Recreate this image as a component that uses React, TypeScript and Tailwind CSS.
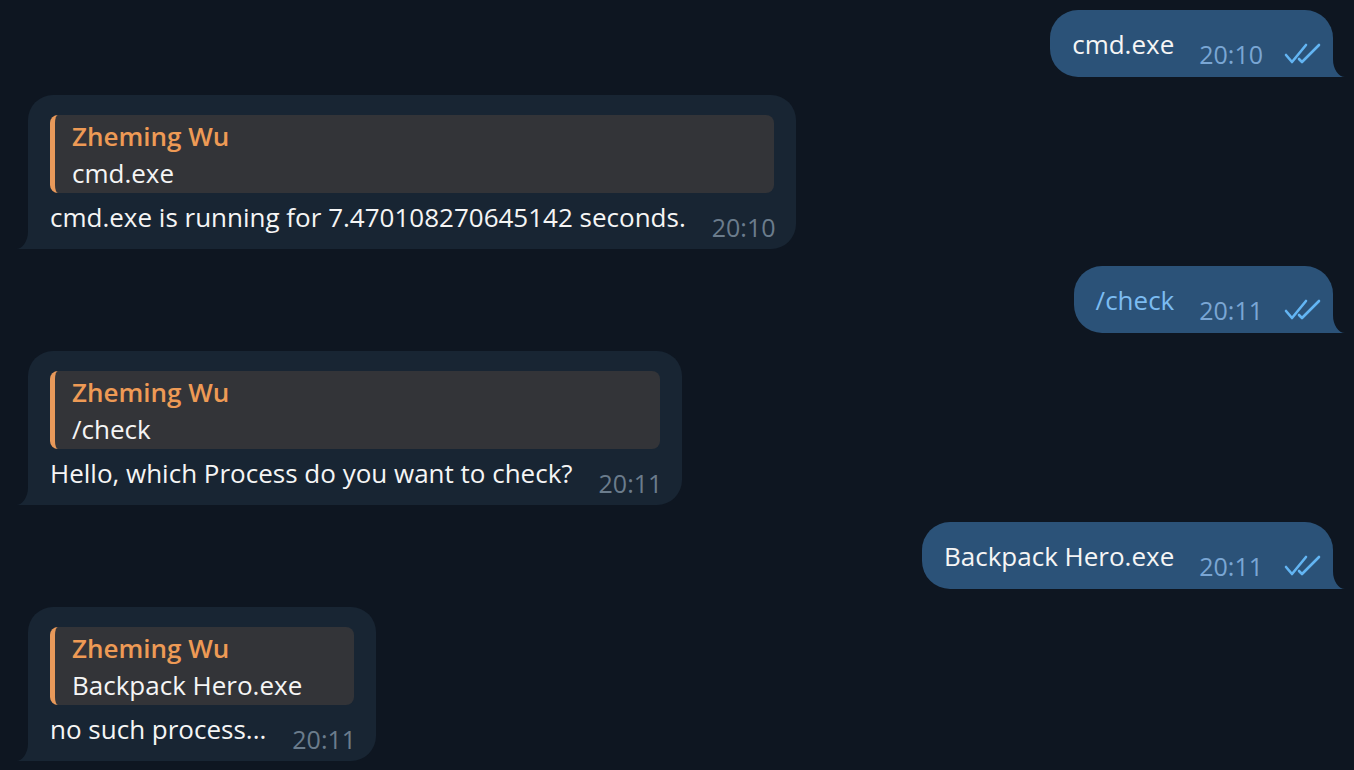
import React from "react";

const font = { fontFamily: '"Open Sans", "Noto Sans", sans-serif' };

function Checks() {
  return (
    <svg width="38" height="22" viewBox="0 0 38 22" fill="none" className="shrink-0">
      <path d="M2 12 L8 19 L22 2" stroke="#63b5f3" strokeWidth="2.6" strokeLinecap="round" strokeLinejoin="round" />
      <path d="M15 16 L18 19 L35 2" stroke="#63b5f3" strokeWidth="2.6" strokeLinecap="round" strokeLinejoin="round" />
    </svg>
  );
}

function TailLeft() {
  return (
    <svg width="13" height="18" viewBox="0 0 13 18" className="absolute bottom-0 left-[-12px]">
      <path d="M13 0 L12 0 A12 18 0 0 1 0 18 L13 18 Z" fill="#182533" />
    </svg>
  );
}

function TailRight() {
  return (
    <svg width="13" height="18" viewBox="0 0 13 18" className="absolute bottom-0 right-[-12px]">
      <path d="M0 0 L1 0 A12 18 0 0 0 13 18 L0 18 Z" fill="#2b5278" />
    </svg>
  );
}

function Outgoing({ text, time, command }: { text: string; time: string; command?: boolean }) {
  return (
    <div className="flex justify-end pr-[21px]">
      <div className="relative flex h-[67px] items-start rounded-[28px] rounded-br-none bg-[#2b5278] pl-[22px] pr-[11px]">
        <span className={`mt-[18px] text-[26px] leading-[33px] ${command ? "text-[#7cbcf2]" : "text-[#f5f5f5]"}`}>{text}</span>
        <span className="ml-[25px] mt-[28px] text-[25px] leading-[33px] text-[#7aa6d4]">{time}</span>
        <span className="ml-[21px] mt-[33px]"><Checks /></span>
        <TailRight />
      </div>
    </div>
  );
}

function Incoming({ quote, text, time }: { quote: string; text: string; time: string }) {
  return (
    <div className="flex justify-start pl-[28px]">
      <div className="relative flex h-[154px] flex-col rounded-[25px] rounded-bl-none bg-[#182533] pl-[22px] pr-[20px] pt-[20px]">
        <div className="mr-[2px] flex flex-col rounded-[8px] border-l-[5px] border-[#e8995a] bg-[#333438] pb-[1px] pl-[17px] pr-[20px] pt-[3px]">
          <span className="text-[26px] font-semibold leading-[37px] text-[#ee9a55]">Zheming Wu</span>
          <span className="text-[26px] leading-[37px] text-[#f5f5f5]">{quote}</span>
        </div>
        <div className="mt-[8px] flex items-start">
          <span className="text-[26px] leading-[33px] text-[#f5f5f5]">{text}</span>
          <span className="ml-auto pl-[26px] mt-[10px] text-[25px] leading-[33px] text-[#6b7c8c]">{time}</span>
        </div>
        <TailLeft />
      </div>
    </div>
  );
}

export default function App() {
  return (
    <div className="h-[770px] w-full overflow-hidden bg-[#0e1621]" style={font}>
      <div className="flex flex-col gap-[17.5px] pt-[10px]">
        <Outgoing text="cmd.exe" time="20:10" />
        <Incoming quote="cmd.exe" text="cmd.exe is running for 7.470108270645142 seconds." time="20:10" />
        <Outgoing text="/check" time="20:11" command />
        <Incoming quote="/check" text="Hello, which Process do you want to check?" time="20:11" />
        <Outgoing text="Backpack Hero.exe" time="20:11" />
        <Incoming quote="Backpack Hero.exe" text="no such process..." time="20:11" />
      </div>
    </div>
  );
}
